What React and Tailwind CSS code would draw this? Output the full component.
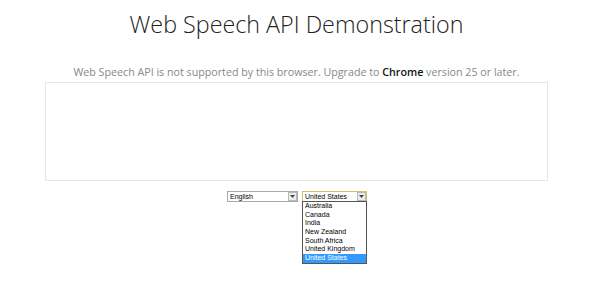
import React from "react";

function Arrow() {
  return (
    <div className="w-[9px] h-[9px] border border-[#b8b8b8] bg-[#ececec] flex items-center justify-center">
      <svg width="5" height="3" viewBox="0 0 5 3"><path d="M0 0H5L2.5 3Z" fill="#444" /></svg>
    </div>
  );
}

export default function App() {
  const items = ["Australia", "Canada", "India", "New Zealand", "South Africa", "United Kingdom", "United States"];
  return (
    <div className="w-[600px] h-[293px] bg-white relative" style={{ fontFamily: '"Open Sans", sans-serif' }}>
      <div className="w-[593px]">
        <h1 className="text-[23.3px] leading-[28px] font-light text-[#222] text-center pt-[10px]">
          Web Speech API Demonstration
        </h1>
        <p className="text-[10.7px] leading-[14px] text-[#888] text-center mt-[27px]">
          Web Speech API is not supported by this browser. Upgrade to <b className="font-semibold text-[#111]">Chrome</b> version 25 or later.
        </p>
        <div className="ml-[45px] w-[503px] h-[99px] border border-[#e6e6e6] mt-[3px]"></div>
        <div className="flex ml-[227px] mt-[10px] gap-[4px]" style={{ fontFamily: '"Liberation Sans", Arial, sans-serif' }}>
          <div className="w-[71px] h-[11px] border border-[#a9a9a9] flex items-center justify-between pl-[2px] text-[7px] leading-none text-black">
            <span>English</span>
            <Arrow />
          </div>
          <div className="relative">
            <div className="w-[65px] h-[11px] border border-[#d9b96a] flex items-center justify-between pl-[2px] text-[7px] leading-none text-black">
              <span>United States</span>
              <Arrow />
            </div>
            <div className="absolute left-0 top-[10px] w-[65px] border border-[#555] bg-white">
              {items.map((it, i) => (
                <div
                  key={it}
                  className={`h-[8.7px] text-[7px] leading-[8.7px] pl-[2px] ${i === items.length - 1 ? "bg-[#3399ff] text-white" : "text-black"}`}
                >
                  {it}
                </div>
              ))}
            </div>
          </div>
        </div>
      </div>
    </div>
  );
}
